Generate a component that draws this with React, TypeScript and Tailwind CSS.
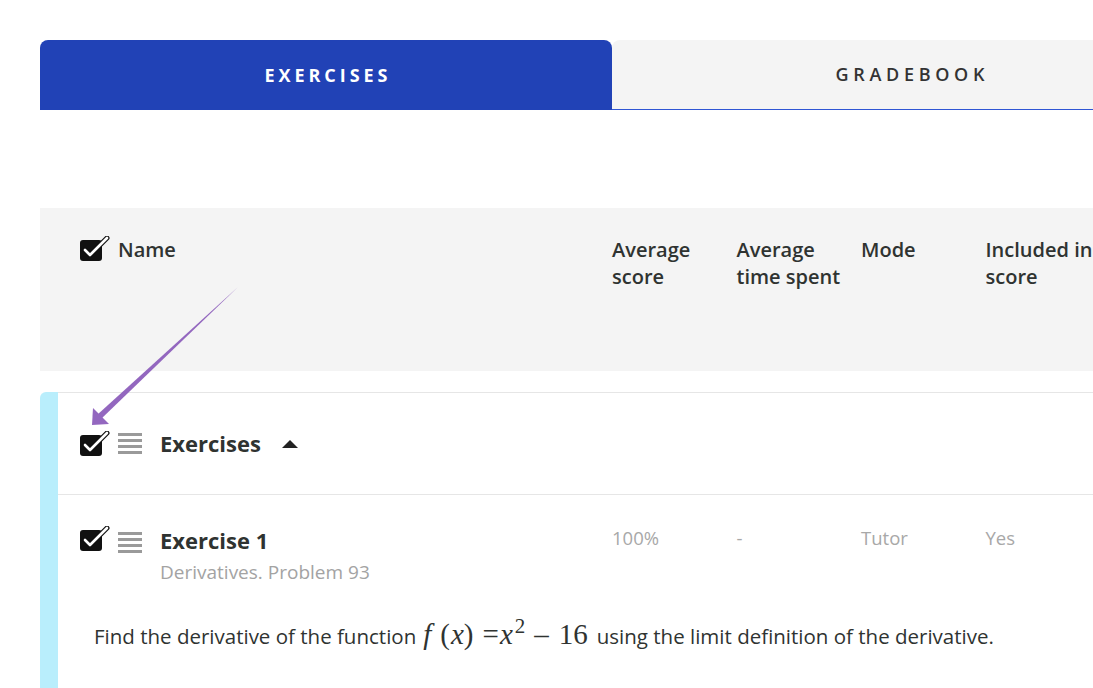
import React from "react";

const CheckIcon = () => (
  <svg width="30" height="26" viewBox="0 0 30 26" className="shrink-0">
    <rect x="0" y="4" width="22" height="21" rx="3" fill="#111" />
    <path d="M5 14 L10 19 L27 2" fill="none" stroke="#111" strokeWidth="5" strokeLinecap="round" strokeLinejoin="round" />
    <path d="M5 14 L10 19 L27 2" fill="none" stroke="#fff" strokeWidth="2.6" strokeLinecap="round" strokeLinejoin="round" />
  </svg>
);

const ListIcon = () => (
  <div className="flex flex-col gap-[3.5px] w-6 shrink-0">
    <span className="block h-[2.5px] bg-[#9a9a9a]" />
    <span className="block h-[2.5px] bg-[#9a9a9a]" />
    <span className="block h-[2.5px] bg-[#9a9a9a]" />
    <span className="block h-[2.5px] bg-[#9a9a9a]" />
  </div>
);

const columns = ["Average\nscore", "Average\ntime spent", "Mode", "Included in\nscore"];
const values = ["100%", "-", "Tutor", "Yes"];

export default function App() {
  return (
    <div
      className="relative w-full h-[688px] overflow-hidden bg-white text-[#2f3331]"
      style={{ fontFamily: '"Open Sans", "Liberation Sans", sans-serif' }}
    >
      <div className="ml-10 pt-10 w-[1168px]">
        {/* Tabs */}
        <div className="flex h-[70px]">
          <div className="w-[572px] bg-[#2142b6] rounded-t-lg flex items-center justify-center">
            <span className="text-white font-bold text-[18px] tracking-[0.22em] pl-[0.22em]">EXERCISES</span>
          </div>
          <div className="w-[596px] bg-[#f4f4f4] rounded-tl-lg border-b border-[#2f55d4] flex items-center justify-center">
            <span className="text-[#333] font-semibold text-[18px] tracking-[0.26em] pl-[0.26em]">GRADEBOOK</span>
          </div>
        </div>

        {/* Table header */}
        <div className="mt-[98px] h-[163px] bg-[#f4f4f4] flex pl-10 pt-[28px]">
          <div className="w-[532px] flex items-start gap-2">
            <CheckIcon />
            <span className="text-[20px] font-semibold leading-[27px]">Name</span>
          </div>
          {columns.map((c) => (
            <div key={c} className="w-[124.5px] shrink-0 text-[20px] font-semibold leading-[27px] whitespace-pre">
              {c}
            </div>
          ))}
        </div>

        {/* Group */}
        <div className="mt-[21px] flex">
          <div className="w-[18px] bg-[#b9eefc] rounded-tl-md shrink-0 h-[320px]" />
          <div className="flex-1">
            <div className="h-[103px] border-t border-b border-[#e6e6e6] flex items-center pl-[22px]">
              <CheckIcon />
              <div className="ml-2">
                <ListIcon />
              </div>
              <span className="ml-[18px] text-[22px] font-bold">Exercises</span>
              <svg width="16" height="10" viewBox="0 0 16 10" className="ml-[21px]">
                <path d="M0 9 L8 1 L16 9 Z" fill="#222" />
              </svg>
            </div>

            <div className="pl-[22px] pt-[30px] flex">
              <div className="w-[532px] flex items-start">
                <div className="pt-[1px]">
                  <CheckIcon />
                </div>
                <div className="ml-2 pt-[7px]">
                  <ListIcon />
                </div>
                <div className="ml-[18px]">
                  <div className="text-[22px] font-bold leading-[30px]">Exercise 1</div>
                  <div className="text-[19px] text-[#a3a3a3] leading-[26px] mt-[4px]">Derivatives. Problem 93</div>
                </div>
              </div>
              {values.map((v) => (
                <div key={v} className="w-[124.5px] shrink-0 text-[18.5px] text-[#a8a8a8] leading-[26px]">
                  {v}
                </div>
              ))}
            </div>

            <div className="pl-9 mt-[28px] text-[20.5px] flex items-baseline whitespace-pre">
              <span>Find the derivative of the function</span>
              <span className="ml-[7px] text-[29px] flex items-baseline" style={{ fontFamily: '"Liberation Serif", serif' }}>
                <i>f</i>
                <span className="ml-[9px]">(</span>
                <i className="ml-[1px]">x</i>
                <span>)</span>
                <span className="ml-[9px]">=</span>
                <i className="ml-[1px]">x</i>
                <span className="text-[21px] relative -top-[11px] ml-[2px]">2</span>
                <span className="ml-[9px]">–</span>
                <span className="ml-[10px]">16</span>
              </span>
              <span className="ml-[9px]">using the limit definition of the derivative.</span>
            </div>
          </div>
        </div>
      </div>

      {/* Annotation arrow */}
      <svg className="absolute left-0 top-0 pointer-events-none" width="1093" height="688">
        <polygon points="238,287 101,419 97,415" fill="#9367bf" />
        <polygon points="92,425 93,408 109,424" fill="#9367bf" />
      </svg>
    </div>
  );
}
